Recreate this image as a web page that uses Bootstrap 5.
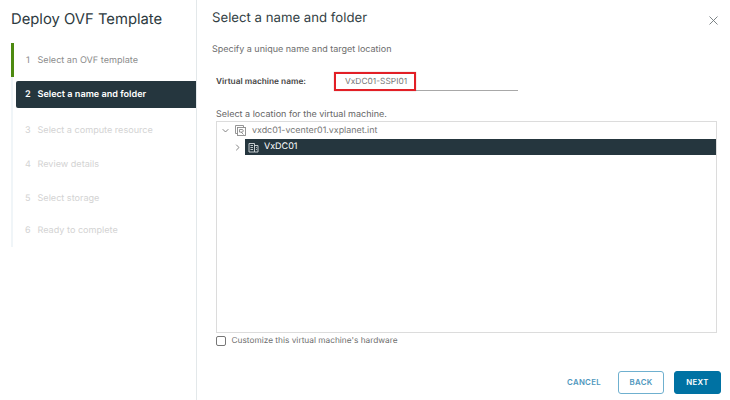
<!DOCTYPE html>
<html lang="en">
<head>
<meta charset="utf-8">
<title>Deploy OVF Template</title>
<link rel="stylesheet" href="https://cdn.jsdelivr.net/npm/bootstrap@5.3.0/dist/css/bootstrap.min.css">
<style>
html,body{width:730px;height:400px;overflow:hidden;background:#fff;}
body{font-family:"Inter","Liberation Sans",sans-serif;color:#565656;font-size:9px;text-rendering:geometricPrecision;}
.wiz-shell{width:730px;height:400px;}
.wiz-side{width:197px;flex:none;border-right:1px solid #e3e8ea;padding:0 0 0 11px;}
.wiz-title{font-size:14.800px;font-weight:400;line-height:20px;color:#2d3a40;margin:9px 0 14px;}
.step-list{border-left:2px solid #f0f5f8;width:185px;}
.step-item{height:34px;display:flex;align-items:center;padding:1px 0 0 12px;color:#d3d3d3;font-size:9.100px;}
.step-item:last-child{height:32px;padding-top:0;}
.step-num{width:12.500px;flex:none;}
.step-done{color:#8c8c8c;border-left:3px solid #4d8a10;margin-left:-2px;padding:2px 0 0 12px;}
.step-done .step-num{width:11.500px;}
.step-active{height:27px;margin:4px 0 5px 3px;padding:1px 0 0 9px;color:#fff;background:#25363e;border-radius:2px 0 0 2px;font-weight:600;}
.wiz-main{padding:0 9px 0 15px;min-width:0;}
.main-title{font-size:13.200px;font-weight:400;line-height:18px;color:#333f45;margin:9px 0 0 0;}
.wiz-close{width:9px;height:9px;display:block;margin:16px 3px 0 0;}
.main-sub{color:#6d6d6d;font-size:9px;line-height:12px;margin:17px 0 0;white-space:nowrap;}
.vm-row{margin:14px 0 0 4px;height:22px;}
.vm-label{width:118px;flex:none;color:#454545;font-weight:600;font-size:8.300px;padding-top:2px;}
.vm-field{width:184px;border-bottom:1px solid #a8a8a8;height:20px;}
.vm-value{width:82px;height:19px;margin-top:1px;border:2px solid #e21f26;padding:1px 0 0 9px;color:#777;font-size:8.400px;line-height:14px;box-shadow:0 0 1px rgba(120,0,0,.4);}
.loc-text{color:#666;font-size:9px;line-height:12px;margin:17px 0 0 4px;white-space:nowrap;}
.tree-box{margin:0 0 0 4px;width:501px;height:212px;border:1px solid #dcdcdc;}
.tree-row{height:16px;display:flex;align-items:center;}
.tree-one{height:17px;padding-left:5px;color:#757575;font-size:8.900px;}
.tree-caret{width:7px;height:7px;flex:none;}
.tree-root-ico{margin-left:6px;margin-right:6px;}
.tree-next{margin-left:17px;}
.tree-selected{margin-left:4px;flex:1;height:16px;display:flex;align-items:center;background:#25363e;color:#fff;font-size:9px;padding-left:3px;}
.tree-ico{width:11px;height:11px;flex:none;}
.tree-dc-ico{margin-right:5px;}
.chk-row{margin:2px 0 0 4px;height:12px;color:#6e6e6e;font-size:8.300px;}
.chk-box{width:10px;height:10px;border:1px solid #777;border-radius:2px;flex:none;margin-right:5.500px;}
.wiz-foot{margin-top:24px;}
.foot-btn{height:23px;font-weight:600;letter-spacing:.3px;padding:0;display:flex;align-items:center;justify-content:center;border-radius:3px;--bs-btn-font-size:7.800px;}
.foot-cancel{width:34px;margin-right:17px;color:#4f97bd;border:0;background:none;}
.foot-back{width:46px;margin-right:10px;color:#4f97bd;border:1px solid #6fb0cf;background:#fff;}
.foot-next{width:47px;color:#fff;background:#0072a3;border:1px solid #0072a3;}
</style>
</head>
<body>
<div class="wiz-shell d-flex">
  <aside class="wiz-side">
    <h1 class="wiz-title">Deploy OVF Template</h1>
    <div class="step-list">
      <div class="step-item step-done"><span class="step-num">1</span>Select an OVF template</div>
      <div class="step-item step-active"><span class="step-num">2</span>Select a name and folder</div>
      <div class="step-item"><span class="step-num">3</span>Select a compute resource</div>
      <div class="step-item"><span class="step-num">4</span>Review details</div>
      <div class="step-item"><span class="step-num">5</span>Select storage</div>
      <div class="step-item"><span class="step-num">6</span>Ready to complete</div>
    </div>
  </aside>
  <main class="wiz-main flex-grow-1 d-flex flex-column">
    <div class="d-flex justify-content-between">
      <h2 class="main-title">Select a name and folder</h2>
      <svg class="wiz-close" viewBox="0 0 9 9" fill="none" stroke="#6f777b" stroke-width=".9"><path d="M.5.5l8 8M8.500.5l-8 8"/></svg>
    </div>
    <p class="main-sub">Specify a unique name and target location</p>
    <div class="vm-row d-flex align-items-center">
      <div class="vm-label">Virtual machine name:</div>
      <div class="vm-field"><div class="vm-value">VxDC01-SSPI01</div></div>
    </div>
    <p class="loc-text">Select a location for the virtual machine.</p>
    <div class="tree-box">
      <div class="tree-row tree-one">
        <svg class="tree-caret" viewBox="0 0 7 7" fill="none" stroke="#777" stroke-width=".9"><path d="M.7 2.200L3.500 5l2.800-2.800"/></svg>
        <svg class="tree-ico tree-root-ico" viewBox="0 0 11 11" fill="none" stroke="#8a8a8a" stroke-width=".9"><path d="M2.500 8.500h-2v-8h8v2"/><rect x="2.500" y="2.500" width="8" height="8"/><path d="M4.500 4.500h2.500a1.200 1.200 0 0 1 0 2.600h-2.500zM6 7l2.500 2.500"/></svg>
        <span>vxdc01-vcenter01.vxplanet.int</span>
      </div>
      <div class="tree-row">
        <svg class="tree-caret tree-next" viewBox="0 0 7 7" fill="none" stroke="#777" stroke-width=".9"><path d="M2.200.7L5 3.500 2.200 6.300"/></svg>
        <div class="tree-selected">
          <svg class="tree-ico tree-dc-ico" viewBox="0 0 11 11" fill="none" stroke="#d5dadc" stroke-width=".9"><path d="M1 1.500h5.500v8.500H1zM6.500 3.500H10V10H6.500M2.500 3.500h2.500M2.500 5.500h2.500M2.500 7.500h2.500M8 5.500h.8M8 7.500h.8"/></svg>
          <span>VxDC01</span>
        </div>
      </div>
    </div>
    <div class="chk-row d-flex align-items-center"><span class="chk-box"></span><span>Customize this virtual machine's hardware</span></div>
    <div class="wiz-foot d-flex justify-content-end">
      <button type="button" class="btn foot-btn foot-cancel">CANCEL</button>
      <button type="button" class="btn foot-btn foot-back">BACK</button>
      <button type="button" class="btn foot-btn foot-next">NEXT</button>
    </div>
  </main>
</div>
<script src="https://cdn.jsdelivr.net/npm/bootstrap@5.3.0/dist/js/bootstrap.bundle.min.js"></script>
</body>
</html>
